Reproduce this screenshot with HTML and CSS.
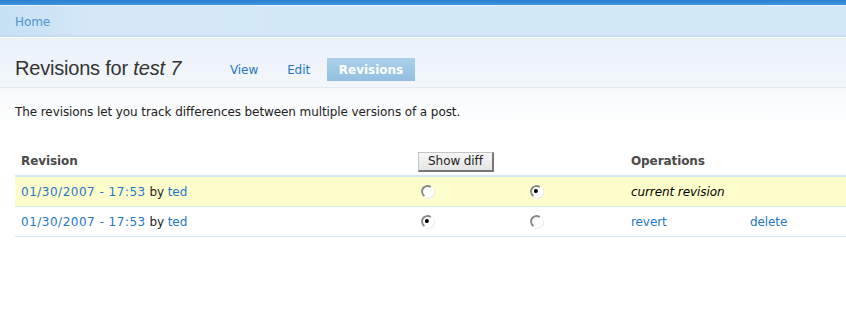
FILE: index.html
```html
<!DOCTYPE html>
<html>
<head>
<meta charset="utf-8">
<link rel="stylesheet" href="styles.css">
</head>
<body>
<div class="topbar"></div>
<div class="crumbs"><a href="#">Home</a></div>
<div class="titlebar">
  <h1>Revisions for <em>test 7</em></h1>
  <ul class="tabs">
    <li><a href="#">View</a></li>
    <li><a href="#">Edit</a></li>
    <li class="active"><a href="#">Revisions</a></li>
  </ul>
</div>
<div class="content">
  <p class="intro">The revisions let you track differences between multiple versions of a post.</p>
  <table class="revs">
    <colgroup>
      <col class="w-rev">
      <col class="w-r1">
      <col class="w-r2">
      <col class="w-op1">
      <col class="w-op2">
    </colgroup>
    <thead>
      <tr>
        <th>Revision</th>
        <th class="c-btn" colspan="2"><button class="diff">Show diff</button></th>
        <th colspan="2">Operations</th>
      </tr>
    </thead>
    <tbody>
      <tr class="current">
        <td><a href="#" class="date">01/30/2007 - 17:53</a> by <a href="#">ted</a></td>
        <td><input type="radio" name="old" class="radio"></td>
        <td><input type="radio" name="new" class="radio" checked></td>
        <td colspan="2"><em>current revision</em></td>
      </tr>
      <tr>
        <td><a href="#" class="date">01/30/2007 - 17:53</a> by <a href="#">ted</a></td>
        <td><input type="radio" name="old" class="radio" checked></td>
        <td><input type="radio" name="new2" class="radio"></td>
        <td><a href="#">revert</a></td>
        <td><a href="#">delete</a></td>
      </tr>
    </tbody>
  </table>
</div>
</body>
</html>
```
FILE: styles.css
```css
html, body {
  margin: 0;
  padding: 0;
  background: #fff;
}
body {
  font-family: "DejaVu Sans", Verdana, sans-serif;
  font-size: 12px;
  color: #222;
  letter-spacing: -0.09px;
}
a {
  color: #1f77c8;
  text-decoration: none;
}
.topbar {
  height: 5px;
  background: linear-gradient(#2b7fd2, #3d96e0);
}
.crumbs {
  box-sizing: border-box;
  height: 33px;
  border-top: 1px solid #e6f1fa;
  border-bottom: 1px solid #fff;
  background: linear-gradient(90deg, #c6e0f4 0px, #d4e8f7 90px, #d3e8f7 100%);
  box-shadow: inset 0 -3px 3px -2px #bcd7f0;
  padding-left: 15px;
  padding-top: 1px;
  display: flex;
  align-items: center;
}
.crumbs a {
  color: #4d94d6;
}
.titlebar {
  box-sizing: border-box;
  height: 50px;
  background: linear-gradient(#e9f1f9, #f3f7fb);
  border-bottom: 1px solid #e4e9ee;
  display: flex;
  align-items: flex-end;
  padding: 0 0 6px 15px;
}
h1 {
  margin: 0 0 1px;
  font-family: "Liberation Sans", Arial, sans-serif;
  font-weight: normal;
  font-size: 20px;
  line-height: 24px;
  color: #333;
  width: 208px;
  letter-spacing: -0.2px;
}
h1 em {
  font-style: italic;
}
.tabs {
  list-style: none;
  margin: 0;
  padding: 0;
  display: flex;
  align-items: flex-end;
}
.tabs li a {
  display: block;
  padding: 5px 7px 4px;
  color: #1f77c8;
  line-height: 14px;
}
.tabs li + li {
  margin-left: 15px;
}
.tabs li.active {
  margin-left: 10px;
}
.tabs li.active a {
  background: linear-gradient(#abd1eb, #93bfdf);
  color: #fff;
  font-weight: bold;
  padding: 5px 0 4px;
  width: 88px;
  text-align: center;
  letter-spacing: 0;
}
.content {
  background: linear-gradient(#f6f9fc, #fff 40px);
  padding: 0 0 0 15px;
}
.intro {
  margin: 0;
  padding: 16px 0 0;
  line-height: 16px;
}
.revs {
  margin-top: 27px;
  border-collapse: collapse;
  width: 831px;
  table-layout: fixed;
}
.w-rev { width: 400px; }
.w-r1 { width: 109px; }
.w-r2 { width: 101px; }
.w-op1 { width: 119px; }
.w-op2 { width: 102px; }
.revs th {
  text-align: left;
  font-weight: bold;
  color: #494949;
  height: 28px;
  padding: 0 0 0 6px;
  border-bottom: 2px solid #d3e7f4;
  vertical-align: middle;
}
.revs th.c-btn {
  padding-left: 3px;
}
.revs td {
  height: 29px;
  padding: 0 0 0 6px;
  border-bottom: 1px solid #d3e7f4;
  vertical-align: middle;
}
.revs tr.current td {
  background: #fefecd;
}
.revs td em {
  color: #000;
}
.date {
  letter-spacing: 0.5px;
}
.diff {
  font-family: "DejaVu Sans", Verdana, sans-serif;
  font-size: 12px;
  color: #222;
  background: linear-gradient(#f6f6f6, #e4e4e4);
  border-style: solid;
  border-color: #c4c4c4 #777 #777 #c4c4c4;
  border-width: 1px 2px 2px 1px;
  padding: 0 8px;
  height: 20px;
  width: 76px;
  margin-top: 1px;
  letter-spacing: -0.09px;
}
.radio {
  -webkit-appearance: none;
  appearance: none;
  width: 13px;
  height: 13px;
  margin: 0;
  border-radius: 50%;
  background: #fff;
  border: 2px solid transparent;
  border-top-color: #8a8a8a;
  border-left-color: #8a8a8a;
  transform: rotate(-10deg);
  box-sizing: border-box;
  position: relative;
  display: block;
  box-shadow: 1px 1px 1px #ececec;
}
.radio:checked::after {
  content: "";
  position: absolute;
  left: 2px;
  top: 2px;
  width: 4px;
  height: 4px;
  border-radius: 50%;
  background: #000;
}
```
